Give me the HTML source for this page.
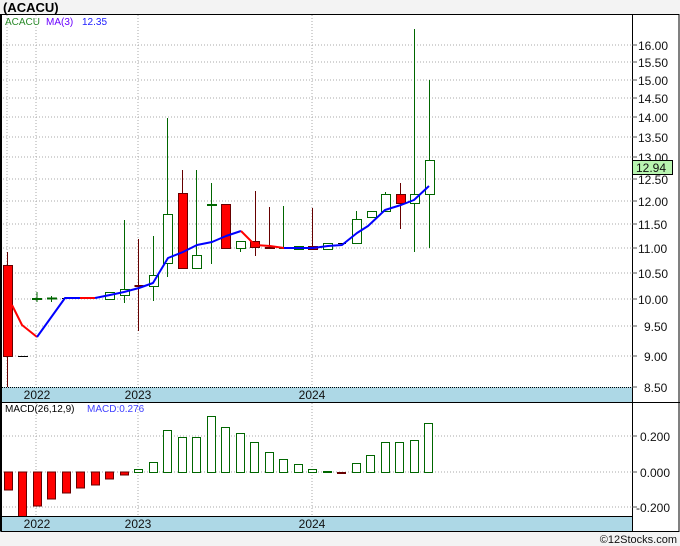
<!DOCTYPE html>
<html><head><style>
html,body{margin:0;padding:0;background:#f3f3f3;}
svg{display:block;font-family:"Liberation Sans",Verdana,sans-serif;}
</style></head><body>
<svg width="680" height="546" viewBox="0 0 680 546" xmlns="http://www.w3.org/2000/svg">
<rect x="0" y="0" width="680" height="546" fill="#f3f3f3"/>
<text x="3" y="12" font-size="13" font-weight="bold" fill="#000">(ACACU)</text>
<rect x="0" y="14" width="680" height="517" fill="#fff"/>
<g stroke="#aaa" stroke-dasharray="1,2" stroke-width="1">
<line x1="7" y1="15" x2="7" y2="387"/>
<line x1="36" y1="15" x2="36" y2="387"/>
<line x1="138" y1="15" x2="138" y2="387"/>
<line x1="312" y1="15" x2="312" y2="387"/>
<line x1="36" y1="403" x2="36" y2="516"/>
<line x1="138" y1="403" x2="138" y2="516"/>
<line x1="312" y1="403" x2="312" y2="516"/>
<line x1="0" y1="45" x2="632" y2="45"/>
<line x1="0" y1="62" x2="632" y2="62"/>
<line x1="0" y1="80" x2="632" y2="80"/>
<line x1="0" y1="98" x2="632" y2="98"/>
<line x1="0" y1="117" x2="632" y2="117"/>
<line x1="0" y1="137" x2="632" y2="137"/>
<line x1="0" y1="157" x2="632" y2="157"/>
<line x1="0" y1="179" x2="632" y2="179"/>
<line x1="0" y1="201" x2="632" y2="201"/>
<line x1="0" y1="224" x2="632" y2="224"/>
<line x1="0" y1="248" x2="632" y2="248"/>
<line x1="0" y1="273" x2="632" y2="273"/>
<line x1="0" y1="299" x2="632" y2="299"/>
<line x1="0" y1="326" x2="632" y2="326"/>
<line x1="0" y1="356" x2="632" y2="356"/>
<line x1="0" y1="436" x2="632" y2="436"/>
<line x1="0" y1="472" x2="632" y2="472"/>
<line x1="0" y1="507" x2="632" y2="507"/>
</g>
<text x="5" y="25" font-size="10" fill="#2a8a2a">ACACU</text>
<text x="46" y="25" font-size="10" fill="#6a00ff">MA(3)</text>
<text x="82" y="25" font-size="10" fill="#2020ff">12.35</text>
<g stroke-width="1">
<line x1="7.5" y1="252" x2="7.5" y2="387" stroke="#600"/>
<rect x="3.5" y="265.5" width="9" height="91" fill="#f00" stroke="#600"/>
<line x1="18" y1="356.5" x2="28" y2="356.5" stroke="#000"/>
<line x1="37" y1="292" x2="37" y2="302" stroke="#060"/>
<line x1="32" y1="299" x2="42" y2="299" stroke="#060" stroke-width="2"/>
<line x1="51.5" y1="296" x2="51.5" y2="302" stroke="#060"/>
<line x1="47" y1="298.5" x2="57" y2="298.5" stroke="#060" stroke-width="2"/>
<line x1="62" y1="298.5" x2="72" y2="298.5" stroke="#000"/>
<rect x="105.5" y="292.5" width="9" height="7" fill="#fff" stroke="#060"/>
<line x1="124.5" y1="220" x2="124.5" y2="303" stroke="#060"/>
<rect x="120.5" y="289.5" width="9" height="6" fill="#fff" stroke="#060"/>
<line x1="138.5" y1="239" x2="138.5" y2="331" stroke="#600"/>
<rect x="134.5" y="285" width="9" height="2" fill="#600"/>
<line x1="153.5" y1="236" x2="153.5" y2="301" stroke="#060"/>
<rect x="149.5" y="275.5" width="9" height="11" fill="#fff" stroke="#060"/>
<line x1="167.5" y1="118" x2="167.5" y2="277" stroke="#060"/>
<rect x="163.5" y="214.5" width="9" height="49" fill="#fff" stroke="#060"/>
<line x1="182.5" y1="170" x2="182.5" y2="268" stroke="#600"/>
<rect x="178.5" y="193.5" width="9" height="75" fill="#f00" stroke="#600"/>
<line x1="196.5" y1="170" x2="196.5" y2="255" stroke="#060"/>
<rect x="192.5" y="255.5" width="9" height="13" fill="#fff" stroke="#060"/>
<line x1="211.5" y1="183" x2="211.5" y2="264" stroke="#060"/>
<line x1="207" y1="205" x2="217" y2="205" stroke="#060" stroke-width="2"/>
<rect x="221.5" y="204.5" width="9" height="44" fill="#f00" stroke="#600"/>
<line x1="240.5" y1="248" x2="240.5" y2="252" stroke="#060"/>
<rect x="236.5" y="241.5" width="9" height="7" fill="#fff" stroke="#060"/>
<line x1="255.5" y1="191" x2="255.5" y2="256" stroke="#600"/>
<rect x="250.5" y="241.5" width="9" height="6" fill="#f00" stroke="#600"/>
<line x1="269.5" y1="207" x2="269.5" y2="248" stroke="#600"/>
<rect x="265" y="247" width="10" height="2" fill="#600"/>
<line x1="283.5" y1="206" x2="283.5" y2="248" stroke="#060"/>
<line x1="279" y1="248.5" x2="289" y2="248.5" stroke="#060"/>
<rect x="294.5" y="246.5" width="9" height="3" fill="#fff" stroke="#060"/>
<line x1="312.5" y1="208" x2="312.5" y2="248" stroke="#600"/>
<rect x="308.5" y="246.5" width="9" height="3" fill="#f00" stroke="#600"/>
<rect x="323.5" y="243.5" width="9" height="6" fill="#fff" stroke="#060"/>
<line x1="338" y1="243.5" x2="346" y2="243.5" stroke="#000"/>
<line x1="356.5" y1="211" x2="356.5" y2="219" stroke="#060"/>
<rect x="352.5" y="219.5" width="9" height="24" fill="#fff" stroke="#060"/>
<rect x="367.5" y="211.5" width="9" height="6" fill="#fff" stroke="#060"/>
<line x1="385.5" y1="192" x2="385.5" y2="194" stroke="#060"/>
<rect x="381.5" y="194.5" width="9" height="17" fill="#fff" stroke="#060"/>
<line x1="400.5" y1="183" x2="400.5" y2="229" stroke="#600"/>
<rect x="396.5" y="194.5" width="9" height="9" fill="#f00" stroke="#600"/>
<line x1="414.5" y1="29" x2="414.5" y2="252" stroke="#060"/>
<rect x="410.5" y="194.5" width="9" height="9" fill="#fff" stroke="#060"/>
<line x1="429.5" y1="80" x2="429.5" y2="248" stroke="#060"/>
<rect x="425.5" y="160.5" width="9" height="34" fill="#fff" stroke="#060"/>
</g>
<g fill="none" stroke-width="2" stroke-linejoin="round">
<polyline stroke="#f00" points="12,305 22,325 37,337"/>
<polyline stroke="#00f" points="37,337 65,298 80,298"/>
<polyline stroke="#f00" points="80,298 95,298"/>
<polyline stroke="#00f" points="95,298 110,295 124,292 139,288 153,283 168,258 183,252 197,245 212,242 226,236 241,231"/>
<polyline stroke="#f00" points="241,231 255,245 270,246 284,248"/>
<polyline stroke="#00f" points="284,248 299,248 313,248 328,246 342,245 357,233 368,226 385,210 401,205 414,200 429,186"/>
</g>
<g stroke-width="1">
<rect x="4.5" y="472" width="8" height="18" fill="#f00" stroke="#600"/>
<rect x="18.5" y="472" width="8" height="45" fill="#f00" stroke="#600"/>
<rect x="33.5" y="472" width="8" height="34" fill="#f00" stroke="#600"/>
<rect x="47.5" y="472" width="8" height="27" fill="#f00" stroke="#600"/>
<rect x="62.5" y="472" width="8" height="21" fill="#f00" stroke="#600"/>
<rect x="76.5" y="472" width="8" height="16" fill="#f00" stroke="#600"/>
<rect x="91.5" y="472" width="8" height="13" fill="#f00" stroke="#600"/>
<rect x="105.5" y="472" width="8" height="7" fill="#f00" stroke="#600"/>
<rect x="120.5" y="472" width="8" height="3" fill="#f00" stroke="#600"/>
<g fill="#fff" stroke="#060">
<rect x="134.5" y="469.5" width="8" height="3"/>
<rect x="149.5" y="462.5" width="8" height="10"/>
<rect x="163.5" y="430.5" width="8" height="42"/>
<rect x="178.5" y="437.5" width="8" height="35"/>
<rect x="192.5" y="437.5" width="8" height="35"/>
<rect x="207.5" y="416.5" width="8" height="56"/>
<rect x="221.5" y="427.5" width="8" height="45"/>
<rect x="236.5" y="433.5" width="8" height="39"/>
<rect x="250.5" y="442.5" width="8" height="30"/>
<rect x="265.5" y="452.5" width="8" height="20"/>
<rect x="279.5" y="459.5" width="8" height="13"/>
<rect x="294.5" y="464.5" width="8" height="8"/>
<rect x="308.5" y="469.5" width="8" height="3"/>
<rect x="352.5" y="463.5" width="8" height="9"/>
<rect x="366.5" y="455.5" width="8" height="17"/>
<rect x="381.5" y="442.5" width="8" height="30"/>
<rect x="395.5" y="442.5" width="8" height="30"/>
<rect x="410.5" y="440.5" width="8" height="32"/>
<rect x="424.5" y="423.5" width="8" height="49"/>
</g>
<rect x="323" y="471" width="9" height="2" fill="#060"/>
<rect x="337" y="472" width="9" height="2" fill="#600"/>
</g>
<text x="5" y="412" font-size="10" fill="#000">MACD(26,12,9)</text>
<text x="87" y="412" font-size="10" fill="#4040ff">MACD:0.276</text>
<rect x="0" y="387" width="632" height="15" fill="#add8e6"/>
<rect x="0" y="517" width="632" height="15" fill="#add8e6"/>
<g stroke="#000" stroke-width="1">
<line x1="0" y1="387.5" x2="632" y2="387.5" stroke-dasharray="1,1"/>
<line x1="0" y1="402.5" x2="680" y2="402.5"/>
<line x1="0" y1="516.5" x2="632" y2="516.5"/>
</g>
<g font-size="12" fill="#111" text-anchor="middle">
<text x="37" y="399">2022</text><text x="138" y="399">2023</text><text x="312" y="399">2024</text>
<text x="37" y="528">2022</text><text x="138" y="528">2023</text><text x="312" y="528">2024</text>
</g>
<rect x="1" y="14.5" width="678" height="517" fill="none" stroke="#000" stroke-width="1"/>
<line x1="1" y1="14" x2="1" y2="531" stroke="#000" stroke-width="2"/>
<line x1="632.5" y1="14" x2="632.5" y2="531" stroke="#000"/>
<g stroke="#555">
<line x1="632" y1="45" x2="637" y2="45"/><line x1="632" y1="62" x2="637" y2="62"/>
<line x1="632" y1="80" x2="637" y2="80"/><line x1="632" y1="98" x2="637" y2="98"/>
<line x1="632" y1="117" x2="637" y2="117"/><line x1="632" y1="137" x2="637" y2="137"/>
<line x1="632" y1="157" x2="637" y2="157"/><line x1="632" y1="179" x2="637" y2="179"/>
<line x1="632" y1="201" x2="637" y2="201"/><line x1="632" y1="224" x2="637" y2="224"/>
<line x1="632" y1="248" x2="637" y2="248"/><line x1="632" y1="273" x2="637" y2="273"/>
<line x1="632" y1="299" x2="637" y2="299"/><line x1="632" y1="326" x2="637" y2="326"/>
<line x1="632" y1="356" x2="637" y2="356"/><line x1="632" y1="387" x2="637" y2="387"/>
<line x1="632" y1="436" x2="637" y2="436"/><line x1="632" y1="472" x2="637" y2="472"/><line x1="632" y1="507" x2="637" y2="507"/>
</g>
<g font-size="12" fill="#111">
<text x="638" y="50">16.00</text><text x="638" y="67">15.50</text><text x="638" y="85">15.00</text>
<text x="638" y="103">14.50</text><text x="638" y="122">14.00</text><text x="638" y="142">13.50</text>
<text x="638" y="162">13.00</text><text x="638" y="184">12.50</text><text x="638" y="206">12.00</text>
<text x="638" y="229">11.50</text><text x="638" y="253">11.00</text><text x="638" y="278">10.50</text>
<text x="638" y="304">10.00</text><text x="644" y="331">9.50</text><text x="644" y="361">9.00</text>
<text x="644" y="392">8.50</text>
<text x="640" y="441">0.200</text><text x="640" y="477">0.000</text><text x="636" y="512">-0.200</text>
</g>
<rect x="632.5" y="160.5" width="40" height="14" fill="#b8f5b0" stroke="#000"/>
<text x="636" y="172" font-size="12" fill="#111">12.94</text>
<text x="677" y="543" font-size="11" fill="#111" text-anchor="end">©12Stocks.com</text>
</svg>
</body></html>
